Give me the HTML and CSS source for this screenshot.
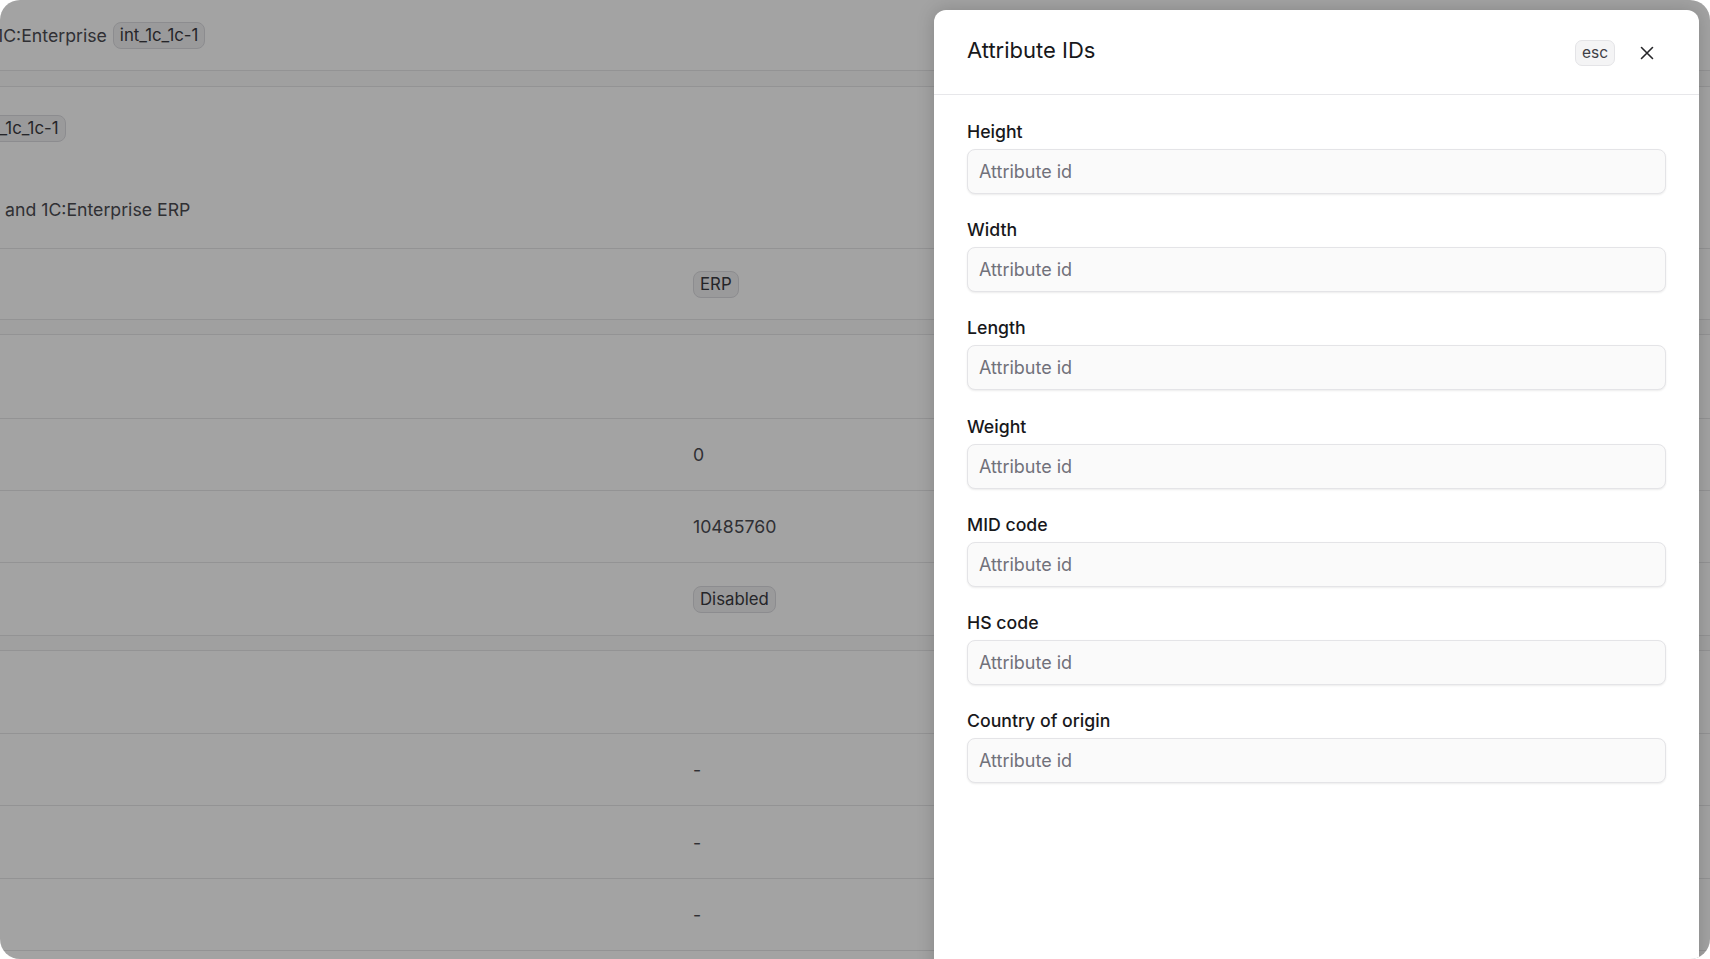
FILE: index.html
```html
<!DOCTYPE html>
<html>
<head>
    <meta charset="utf-8" />
    <title>Integration - Attribute IDs</title>
    <link rel="stylesheet" href="styles.css">
</head>
<body>
    <div class="frame">
        <main class="page">
            <div class="titleRow">
                <span class="title">1C:Enterprise</span>
                <span class="tag">int_1c_1c-1</span>
            </div>
            <div class="band"></div>
            <div class="card">
                <span class="tag tagCut">int_1c_1c-1</span>
                <p class="desc">and 1C:Enterprise ERP</p>
            </div>
            <div class="row rowShort"><span></span><span class="tag">ERP</span></div>
            <div class="band bandThin"></div>
            <div class="row rowHead"></div>
            <div class="row"><span></span><span>0</span></div>
            <div class="row"><span></span><span>10485760</span></div>
            <div class="row rowTall"><span></span><span class="tag">Disabled</span></div>
            <div class="band bandThin"></div>
            <div class="row rowHead rowHeadShort"></div>
            <div class="row"><span></span><span>-</span></div>
            <div class="row rowTall"><span></span><span>-</span></div>
            <div class="row"><span></span><span>-</span></div>
            <div class="row"><span></span><span>-</span></div>
        </main>

        <div class="overlay"></div>

        <aside class="drawer">
            <div class="drawerHead">
                <h2 class="drawerTitle">Attribute IDs</h2>
                <div class="drawerTools">
                    <span class="kbd">esc</span>
                    <button class="closeBtn" aria-label="Close">
                        <svg width="14" height="14" viewBox="0 0 14 14" fill="none" stroke="#27272a" stroke-width="1.6" stroke-linecap="round">
                            <path d="M1.5 1.5 12.5 12.5M12.5 1.5 1.5 12.5" />
                        </svg>
                    </button>
                </div>
            </div>
            <form class="drawerBody" action="javascript:void(0);">
                <label class="field">
                    <span class="fieldLabel">Height</span>
                    <input type="text" placeholder="Attribute id">
                </label>
                <label class="field">
                    <span class="fieldLabel">Width</span>
                    <input type="text" placeholder="Attribute id">
                </label>
                <label class="field">
                    <span class="fieldLabel">Length</span>
                    <input type="text" placeholder="Attribute id">
                </label>
                <label class="field">
                    <span class="fieldLabel">Weight</span>
                    <input type="text" placeholder="Attribute id">
                </label>
                <label class="field">
                    <span class="fieldLabel">MID code</span>
                    <input type="text" placeholder="Attribute id">
                </label>
                <label class="field">
                    <span class="fieldLabel">HS code</span>
                    <input type="text" placeholder="Attribute id">
                </label>
                <label class="field">
                    <span class="fieldLabel">Country of origin</span>
                    <input type="text" placeholder="Attribute id">
                </label>
            </form>
        </aside>
    </div>
</body>
</html>
```

FILE: styles.css
```css
body {
    font-family: Inter, "Noto Sans", sans-serif;
    font-size: 17.7px;
    margin: 0;
    background-color: white;
}
p, h2 {
    margin: 0;
}
.frame {
    position: relative;
    height: 959px;
    border-radius: 20px;
    overflow: hidden;
    background-color: white;
}

/* page behind the drawer */
.page {
    color: #4c4c52;
}
.page > div {
    box-sizing: border-box;
}
.titleRow {
    display: flex;
    align-items: center;
    gap: 6px;
    height: 71px;
    margin-left: -4px;
    border-bottom: 1px solid #e6e6e8;
}
.tag {
    display: inline-block;
    justify-self: start;
    padding: 3px 6px;
    border: 1px solid #dcdce0;
    border-radius: 8px;
    background-color: #f1f1f3;
    color: #3a3a40;
    font-size: 16.8px;
    line-height: 19px;
}
.band {
    height: 16px;
    background-color: #fafafa;
    border-bottom: 1px solid #e6e6e8;
}
.bandThin {
    height: 15px;
}
.card {
    display: flex;
    flex-direction: column;
    align-items: flex-start;
    height: 162px;
    padding-top: 28px;
    border-bottom: 1px solid #e6e6e8;
}
.tagCut {
    margin-left: -27px;
}
.desc {
    margin-top: 56px;
    margin-left: 5px;
    line-height: 24px;
}
.row {
    display: grid;
    grid-template-columns: 693px 1fr;
    align-items: center;
    height: 72px;
    border-bottom: 1px solid #e6e6e8;
}
.rowShort {
    height: 71px;
}
.rowTall {
    height: 73px;
}
.rowHead {
    height: 84px;
}
.rowHeadShort {
    height: 83px;
}

.overlay {
    position: absolute;
    inset: 0;
    background-color: rgba(0, 0, 0, 0.36);
}

/* drawer */
.drawer {
    position: absolute;
    top: 10px;
    right: 11px;
    bottom: -20px;
    width: 765px;
    background-color: white;
    border-radius: 12px;
    box-shadow: 0 0 18px rgba(0, 0, 0, 0.18);
    color: #18181b;
}
.drawerHead {
    display: flex;
    align-items: center;
    justify-content: space-between;
    height: 85px;
    box-sizing: border-box;
    padding: 0 32px 0 33px;
    border-bottom: 1px solid #e7e7ea;
}
.drawerTitle {
    margin-bottom: 4px;
    font-size: 22px;
    font-weight: 400;
}
.drawerTools {
    display: flex;
    align-items: center;
    gap: 12px;
    margin-top: 2px;
}
.kbd {
    display: inline-block;
    padding: 3px 6px;
    border: 1px solid #e4e4e7;
    border-radius: 7px;
    background-color: #f4f4f5;
    color: #3f3f46;
    font-size: 15.5px;
    line-height: 18px;
}
.closeBtn {
    display: flex;
    align-items: center;
    justify-content: center;
    width: 40px;
    height: 40px;
    padding: 0;
    border: none;
    background: none;
}
.drawerBody {
    display: flex;
    flex-direction: column;
    gap: 24.2px;
    padding: 25px 33px;
}
.field {
    display: flex;
    flex-direction: column;
    gap: 5px;
}
.fieldLabel {
    font-weight: 500;
    line-height: 24px;
}
input {
    height: 45px;
    box-sizing: border-box;
    padding: 0 11px;
    border: 1px solid #e4e4e7;
    border-radius: 8px;
    background-color: #fafafa;
    box-shadow: 0 1px 2px rgba(0, 0, 0, 0.08);
    font-family: inherit;
    font-size: 18px;
    color: #18181b;
}
::placeholder {
    color: #71717a;
}
```
